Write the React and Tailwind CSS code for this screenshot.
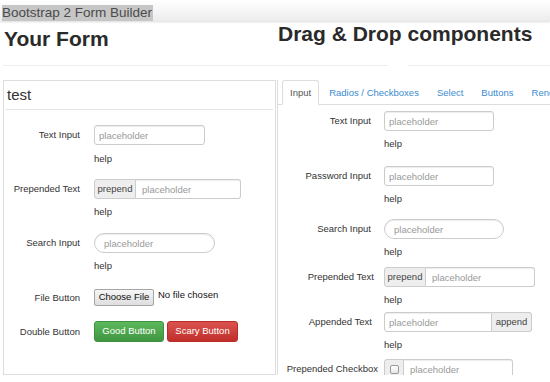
import clsx from "clsx";

const inputBase =
  "h-[20px] rounded-[3px] border border-[#ccc] bg-white px-[4px] text-[9.5px] text-[#555] placeholder:text-[#999] outline-none shadow-[inset_0_1px_1px_rgba(0,0,0,0.075)]";

function LeftRow({ label, className, children }) {
  return (
    <div className={clsx("flex items-center", className)}>
      <div className="w-[76px] shrink-0 text-right text-[9.5px] leading-[14px]">{label}</div>
      <div className="ml-[14px] flex items-center">{children}</div>
    </div>
  );
}

// long labels sit a few px further right in the reference, so width/gap are per row
function RightRow({ label, className, labelW = "w-[93px]", gap = "ml-[13px]", children }) {
  return (
    <div className={clsx("flex items-center", className)}>
      <div className={clsx("shrink-0 whitespace-nowrap text-right text-[9.5px] leading-[14px]", labelW)}>{label}</div>
      <div className={clsx("flex items-center", gap)}>{children}</div>
    </div>
  );
}

function Help({ className, right }) {
  return (
    <div className={clsx("text-[9.5px] leading-[14px]", right ? "pl-[106px]" : "pl-[90px]", className)}>help</div>
  );
}

function Prepended({ width, addonWidth }) {
  return (
    <div className={clsx("flex h-[20px]", width)}>
      <span
        className={clsx(
          "flex items-center justify-center rounded-l-[3px] border border-[#ccc] bg-[#eee] text-[9.5px] text-[#444]",
          addonWidth
        )}
      >
        prepend
      </span>
      <input
        readOnly
        placeholder="placeholder"
        className={clsx(inputBase, "min-w-0 flex-1 rounded-l-none border-l-0 px-[6px]")}
      />
    </div>
  );
}

export default function App() {
  return (
    <div className="h-[382px] w-[550px] overflow-hidden bg-white font-['Liberation_Sans',Arial,sans-serif] text-[#333]">
      <div className="relative z-10 h-[21px] bg-gradient-to-b from-[#ffffff] to-[#ececec] shadow-[0_1px_2px_rgba(0,0,0,0.15)]">
        <span className="ml-[2px] inline-block bg-[#c6c6c6] pr-[1px] text-[13.5px] leading-[16px] text-[#4a4a4a]">
          Bootstrap 2 Form Builder
        </span>
      </div>

      <div className="flex h-[44px]">
        <div className="ml-[3px] w-[273px] shrink-0 pl-[1px]">
          <h2 className="mt-[6px] text-[21px] font-bold leading-[23px] text-[#2a2a2a]">Your Form</h2>
        </div>
        <div className="ml-[1px] pl-[1px]">
          <h2 className="mt-[1px] whitespace-nowrap text-[21px] font-bold leading-[23px] text-[#2a2a2a]">
            Drag &amp; Drop components
          </h2>
        </div>
      </div>

      <div className="flex h-px">
        <div className="ml-[3px] w-[385px] bg-[#eee]" />
        <div className="ml-[20px] flex-1 bg-[#eee]" />
      </div>

      <div className="mt-[14px] flex items-start">
        {/* left: the form being built */}
        <div className="ml-[3px] h-[295px] w-[273px] shrink-0 border border-[#ddd]">
          <div className="mx-[2px] border-b border-[#e5e5e5] pl-[1px] text-[15px] leading-[28px] text-[#333]">test</div>

          <LeftRow label="Text Input" className="mt-[15px]">
            <input readOnly placeholder="placeholder" className={clsx(inputBase, "w-[111px]")} />
          </LeftRow>
          <Help className="mt-[7px]" />

          <LeftRow label="Prepended Text" className="mt-[13px]">
            <Prepended width="w-[147px]" addonWidth="w-[42px]" />
          </LeftRow>
          <Help className="mt-[6px]" />

          <LeftRow label="Search Input" className="mt-[14px]">
            <input
              readOnly
              placeholder="placeholder"
              className={clsx(inputBase, "w-[121px] rounded-full px-[9px]")}
            />
          </LeftRow>
          <Help className="mt-[6px]" />

          <LeftRow label="File Button" className="mt-[16px]">
            <span className="flex h-[17px] w-[60px] items-center justify-center rounded-[2px] border border-[#a5a5a5] bg-gradient-to-b from-[#f6f6f6] to-[#dedede] text-[9.5px] text-[#111]">
              Choose File
            </span>
            <span className="ml-[4px] -mt-[5px] text-[9.5px] text-[#111]">No file chosen</span>
          </LeftRow>

          <LeftRow label="Double Button" className="mt-[15px]">
            <span className="flex h-[21px] w-[70px] items-center justify-center rounded-[3px] border border-[#3e8f3e] bg-gradient-to-b from-[#5cb85c] to-[#419641] text-[9.5px] text-white">
              Good Button
            </span>
            <span className="ml-[3px] flex h-[21px] w-[71px] items-center justify-center rounded-[3px] border border-[#b92c28] bg-gradient-to-b from-[#d9534f] to-[#c12e2a] text-[9.5px] text-white">
              Scary Button
            </span>
          </LeftRow>
        </div>

        {/* right: components palette */}
        <div className="ml-[1px] h-[295px] flex-1 overflow-hidden border-l border-[#ddd]">
          <div className="flex h-[25px] whitespace-nowrap border-b border-[#ddd] pl-[4px] text-[9.5px]">
            <span className="h-[25px] rounded-t-[3px] border border-[#ddd] border-b-white bg-white px-[7px] leading-[23px] text-[#555]">
              Input
            </span>
            <span className="ml-[2px] border border-transparent px-[7px] leading-[23px] text-[#3b8bd0]">
              Radios / Checkboxes
            </span>
            <span className="ml-[2px] border border-transparent px-[7px] leading-[23px] text-[#3b8bd0]">Select</span>
            <span className="ml-[2px] border border-transparent px-[7px] leading-[23px] text-[#3b8bd0]">Buttons</span>
            <span className="ml-[2px] border border-transparent px-[7px] leading-[23px] text-[#3b8bd0]">Rendered</span>
          </div>

          <RightRow label="Text Input" className="mt-[6px]">
            <input readOnly placeholder="placeholder" className={clsx(inputBase, "w-[110px]")} />
          </RightRow>
          <Help right className="mt-[6px]" />

          <RightRow label="Password Input" className="mt-[15px]">
            <input readOnly placeholder="placeholder" className={clsx(inputBase, "w-[110px]")} />
          </RightRow>
          <Help right className="mt-[6px]" />

          <RightRow label="Search Input" className="mt-[13px]">
            <input
              readOnly
              placeholder="placeholder"
              className={clsx(inputBase, "w-[120px] rounded-full px-[9px]")}
            />
          </RightRow>
          <Help right className="mt-[6px]" />

          <RightRow label="Prepended Text" labelW="w-[96px]" gap="ml-[10px]" className="mt-[8px]">
            <Prepended width="w-[151px]" addonWidth="w-[42px]" />
          </RightRow>
          <Help right className="mt-[6px]" />

          <RightRow label="Appended Text" labelW="w-[94px]" gap="ml-[12px]" className="mt-[5px]">
            <span className="flex h-[20px] w-[148px]">
              <input
                readOnly
                placeholder="placeholder"
                className={clsx(inputBase, "min-w-0 flex-1 rounded-r-none")}
              />
              <span className="flex w-[40px] items-center justify-center rounded-r-[3px] border border-l-0 border-[#ccc] bg-[#eee] text-[9.5px] text-[#444]">
                append
              </span>
            </span>
          </RightRow>
          <Help right className="mt-[6px]" />

          <RightRow label="Prepended Checkbox" labelW="w-[100px]" gap="ml-[6px]" className="mt-[7px]">
            <span className="flex h-[20px] w-[129px]">
              <span className="flex w-[20px] items-center justify-center rounded-l-[3px] border border-[#ccc] bg-[#eee]">
                <span className="h-[9px] w-[9px] rounded-[2px] border border-[#999] bg-gradient-to-b from-[#fff] to-[#e6e6e6]" />
              </span>
              <input
                readOnly
                placeholder="placeholder"
                className={clsx(inputBase, "min-w-0 flex-1 rounded-l-none border-l-0 px-[6px]")}
              />
            </span>
          </RightRow>
        </div>
      </div>
    </div>
  );
}
